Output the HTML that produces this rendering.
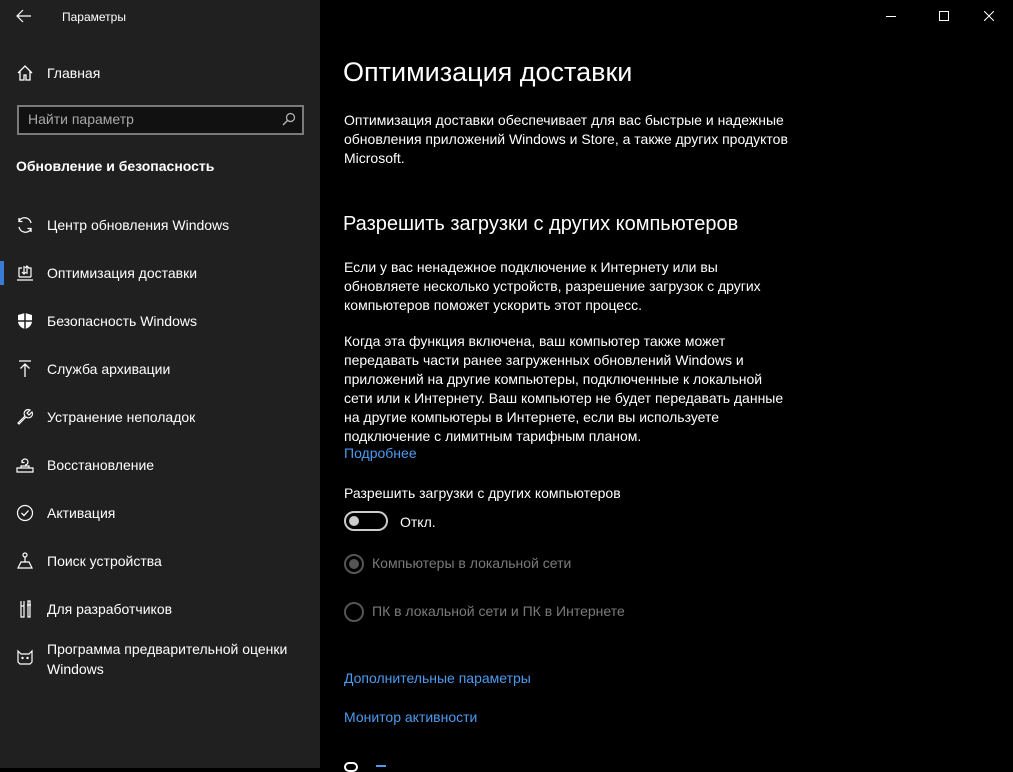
<!DOCTYPE html>
<html><head><meta charset="utf-8"><style>
*{margin:0;padding:0;box-sizing:border-box}
body{width:1013px;height:768px;overflow:hidden;background:#000;font-family:"Liberation Sans",sans-serif;color:#fff;position:relative}
#side{position:absolute;left:0;top:0;width:320px;height:768px;background:#202020}
.a{position:absolute;white-space:nowrap}
.t{font-size:14px}
.ic{position:absolute;left:16px;width:18px;height:18px}
#main .p{position:absolute;left:344px;font-size:14px;line-height:19px;width:470px}
.lnk{color:#4c9bf0}
.g{color:#7a7a7a}
</style></head><body>
<div id="side">
 <svg class="a" style="left:16px;top:9px" width="16" height="14" viewBox="0 0 16 14"><path d="M15 7H2M7 1L1 7l6 6" stroke="#fff" fill="none" stroke-width="1.2"/></svg>
 <div class="a" style="left:62px;top:10px;font-size:12px">Параметры</div>
 <svg class="ic" style="top:64px" viewBox="0 0 18 18"><path d="M2 9L9 2l7 7M4 7v9h4v-5h2v5h4V7" stroke="#fff" fill="none" stroke-width="1.3"/></svg>
 <div class="a t" style="left:47px;top:65px">Главная</div>
 <div class="a" style="left:17px;top:105px;width:287px;height:30px;border:2px solid #7a7a7a;background:#111"></div>
 <div class="a t" style="left:28px;top:111px;color:#a8a8a8">Найти параметр</div>
 <svg class="a" style="left:282px;top:112px" width="14" height="14" viewBox="0 0 14 14"><circle cx="8.5" cy="5.5" r="4" stroke="#bbb" fill="none" stroke-width="1.2"/><path d="M5.5 8.5L1 13" stroke="#bbb" stroke-width="1.3"/></svg>
 <div class="a t" style="left:16px;top:158px;font-weight:bold">Обновление и безопасность</div>

 <svg class="ic" style="top:216px" viewBox="0 0 18 18"><path d="M15 7A6.5 6.5 0 0 0 3 5M3 11a6.5 6.5 0 0 0 12 2M3 2v3.5h3.5M15 16v-3.5h-3.5" stroke="#fff" fill="none" stroke-width="1.3"/></svg>
 <div class="a t" style="left:47px;top:217px">Центр обновления Windows</div>
 <div class="a" style="left:0;top:261px;width:4px;height:24px;background:#3a7bd5"></div>
 <svg class="ic" style="top:264px" viewBox="0 0 18 18"><path d="M1 16h16M3 13h12M3 13V4h3M15 13V4h-3M8 2v8M6 8l2 2 2-2M11 10V2M9 4l2-2 2 2" stroke="#fff" fill="none" stroke-width="1.2"/></svg>
 <div class="a t" style="left:47px;top:265px">Оптимизация доставки</div>
 <svg class="ic" style="top:312px" viewBox="0 0 18 18"><path d="M9 1L2 3v6c0 4 3 7 7 8 4-1 7-4 7-8V3z" fill="#fff"/><path d="M9 1v16M2 9h14" stroke="#202020" stroke-width="1.5"/></svg>
 <div class="a t" style="left:47px;top:313px">Безопасность Windows</div>
 <svg class="ic" style="top:360px" viewBox="0 0 18 18"><path d="M3 1h12M9 17V4M4.5 8.5L9 4l4.5 4.5" stroke="#fff" fill="none" stroke-width="1.3"/></svg>
 <div class="a t" style="left:47px;top:361px">Служба архивации</div>
 <svg class="ic" style="top:408px" viewBox="0 0 18 18"><path d="M2 15l7-7a4 4 0 0 1 5-6l-3 3 2 2 3-3a4 4 0 0 1-6 5l-7 7z" stroke="#fff" fill="none" stroke-width="1.2"/></svg>
 <div class="a t" style="left:47px;top:409px">Устранение неполадок</div>
 <svg class="ic" style="top:456px" viewBox="0 0 18 18"><path d="M1 12h16v4H1zM5 12v-2h8v2M6 6a3 3 0 1 1 3 3M6 4v2.5h2.5" stroke="#fff" fill="none" stroke-width="1.2"/></svg>
 <div class="a t" style="left:47px;top:457px">Восстановление</div>
 <svg class="ic" style="top:504px" viewBox="0 0 18 18"><circle cx="9" cy="9" r="7.5" stroke="#fff" fill="none" stroke-width="1.2"/><path d="M5.5 9l2.5 2.5 4.5-5" stroke="#fff" fill="none" stroke-width="1.3"/></svg>
 <div class="a t" style="left:47px;top:505px">Активация</div>
 <svg class="ic" style="top:552px" viewBox="0 0 18 18"><circle cx="9" cy="3" r="2" stroke="#fff" fill="none" stroke-width="1.2"/><path d="M9 5v5M5 10h8l3 6H2z" stroke="#fff" fill="none" stroke-width="1.2"/></svg>
 <div class="a t" style="left:47px;top:553px">Поиск устройства</div>
 <svg class="ic" style="top:600px" viewBox="0 0 18 18"><path d="M5 1v5M8 1v5M5 6h3v11H5zM12 1v16h2V1zM11 5h4" stroke="#fff" fill="none" stroke-width="1.2"/></svg>
 <div class="a t" style="left:47px;top:601px">Для разработчиков</div>
 <svg class="ic" style="top:648px" viewBox="0 0 18 18"><path d="M2 3l3 3h8l3-3v11l-2 2H4l-2-2z" stroke="#fff" fill="none" stroke-width="1.2"/><circle cx="6.5" cy="10" r="1.2" fill="#fff"/><circle cx="11.5" cy="10" r="1.2" fill="#fff"/></svg>
 <div class="a t" style="left:47px;top:639px;line-height:20px">Программа предварительной оценки<br>Windows</div>
</div>

<div id="main">
 <svg class="a" style="left:886px;top:16px" width="10" height="1"><rect width="10" height="1" fill="#fff"/></svg>
 <div class="a" style="left:939px;top:11px;width:10px;height:10px;border:1px solid #fff"></div>
 <svg class="a" style="left:984px;top:11px" width="10" height="10"><path d="M0 0L10 10M10 0L0 10" stroke="#fff"/></svg>
 <div class="a" style="left:343px;top:57px;font-size:27px">Оптимизация доставки</div>
 <div class="p" style="top:111px">Оптимизация доставки обеспечивает для вас быстрые и надежные обновления приложений Windows и Store, а также других продуктов Microsoft.</div>
 <div class="a" style="left:343px;top:213px;font-size:20px">Разрешить загрузки с других компьютеров</div>
 <div class="p" style="top:258px;width:430px">Если у вас ненадежное подключение к Интернету или вы обновляете несколько устройств, разрешение загрузок с других компьютеров поможет ускорить этот процесс.</div>
 <div class="p" style="top:332px;width:440px">Когда эта функция включена, ваш компьютер также может передавать части ранее загруженных обновлений Windows и приложений на другие компьютеры, подключенные к локальной сети или к Интернету. Ваш компьютер не будет передавать данные на другие компьютеры в Интернете, если вы используете подключение с лимитным тарифным планом.</div>
 <div class="p lnk" style="top:444px">Подробнее</div>
 <div class="p" style="top:484px">Разрешить загрузки с других компьютеров</div>
 <div class="a" style="left:344px;top:511px;width:44px;height:20px;border:2px solid #ccc;border-radius:10px"></div>
 <div class="a" style="left:349px;top:516px;width:10px;height:10px;border-radius:5px;background:#ccc"></div>
 <div class="a t" style="left:400px;top:514px">Откл.</div>
 <div class="a" style="left:344px;top:554px;width:20px;height:20px;border:2px solid #555;border-radius:50%"></div>
 <div class="a" style="left:349px;top:559px;width:10px;height:10px;border-radius:50%;background:#555"></div>
 <div class="a t g" style="left:372px;top:555px">Компьютеры в локальной сети</div>
 <div class="a" style="left:344px;top:602px;width:20px;height:20px;border:2px solid #555;border-radius:50%"></div>
 <div class="a t g" style="left:372px;top:603px">ПК в локальной сети и ПК в Интернете</div>
 <div class="p lnk" style="top:669px">Дополнительные параметры</div>
 <div class="p lnk" style="top:708px">Монитор активности</div>
 <div class="a" style="left:344px;top:762px;width:14px;height:10px;border-radius:6px;border:2px solid #fff"></div>
 <div class="a" style="left:376px;top:765px;width:10px;height:2px;background:#4c9bf0"></div>
</div>
</body></html>
